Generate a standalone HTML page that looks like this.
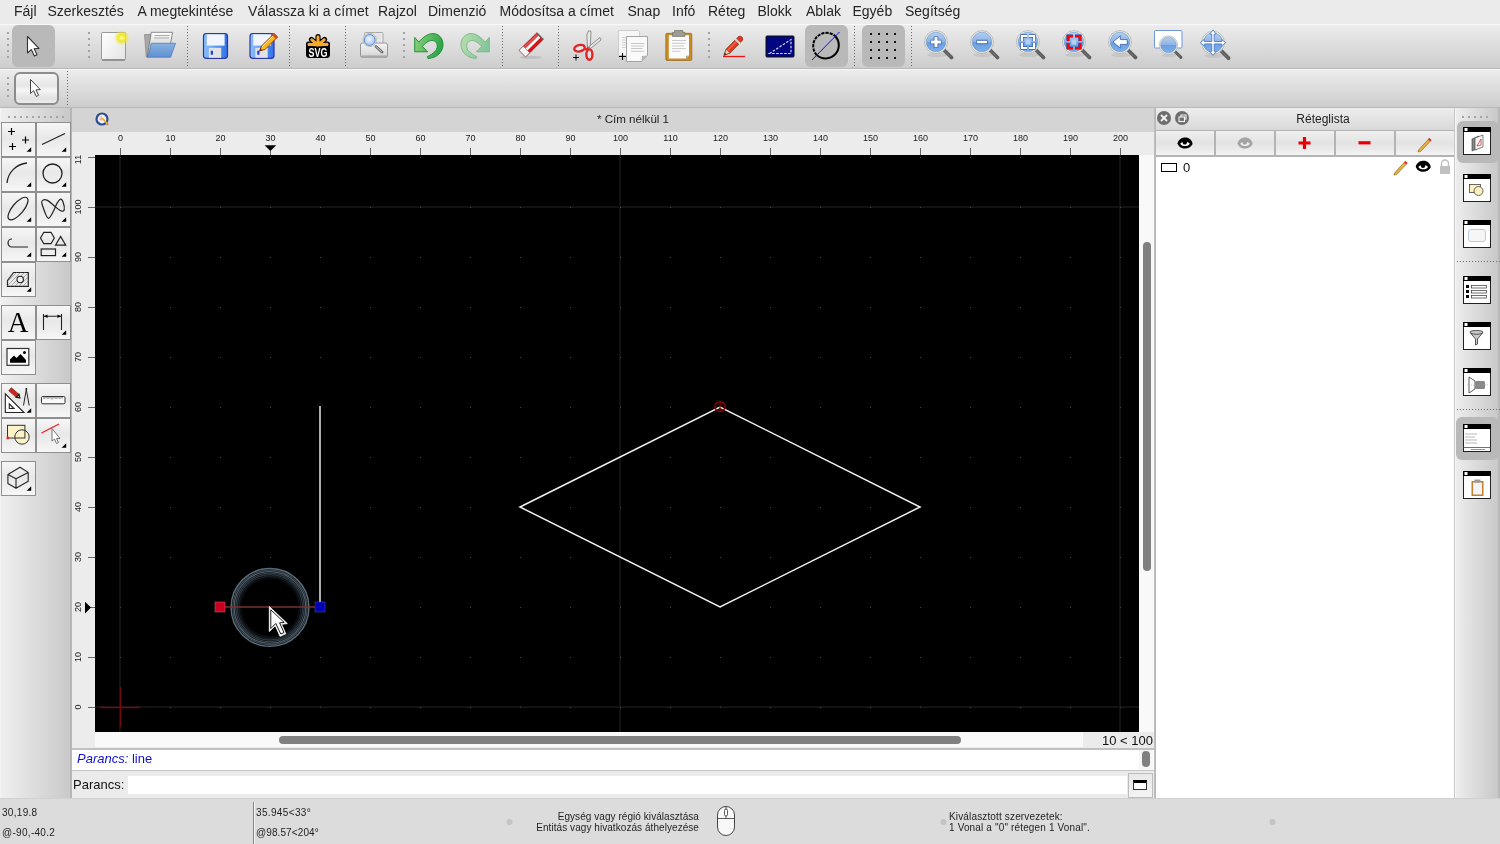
<!DOCTYPE html>
<html><head><meta charset="utf-8">
<style>
*{margin:0;padding:0;box-sizing:border-box}
html,body{width:1500px;height:844px;overflow:hidden;background:#ececec;font-family:"Liberation Sans",sans-serif;position:relative}
#wrap{position:absolute;left:0;top:0;width:1500px;height:844px;will-change:transform}
.a{position:absolute}
#menu{left:0;top:0;width:1500px;height:24px;background:#ebebeb}
#menu span{position:absolute;top:3px;font-size:14px;color:#252525;white-space:nowrap}
#tb1{left:0;top:24px;width:1500px;height:45px;background:linear-gradient(#ececec,#dedede 45%,#cdcdcd);border-top:1px solid #f8f8f8;border-bottom:1px solid #b8b8b8}
#tb2{left:0;top:69px;width:1500px;height:39px;background:linear-gradient(#ececec,#dedede 45%,#cdcdcd);border-top:1px solid #f8f8f8;border-bottom:1px solid #b8b8b8}
.sep{position:absolute;width:1px;background:repeating-linear-gradient(#6a6a6a 0 1px,transparent 1px 3px)}
.hdl{position:absolute;width:3px}
.hdl i{position:absolute;left:0;width:2px;height:2px;background:#a4a4a4}
.selbtn{position:absolute;background:#b9b9b9;border-radius:6px}
#ldock{left:0;top:108px;width:70px;height:690px;background:linear-gradient(90deg,#f6f6f6,#efefef 2%,#c9c9c9)}
.tbtn{position:absolute;width:35px;height:35px;border:1px solid #8f8f8f;background:linear-gradient(#f6f6f6,#e8e8e8 45%,#eeeeee 70%,#f6f6f6)}
.tbtn svg{position:absolute;left:0;top:0}
.hdlh i{position:absolute;top:0;width:2px;height:2px;background:#a4a4a4}
.lbtn{top:131px;width:58px;height:24px;background:linear-gradient(#efefef,#e3e3e3 50%,#ececec 80%,#f3f3f3)}
.sep2{width:43px;height:1px;background:repeating-linear-gradient(90deg,#6a6a6a 0 1px,transparent 1px 3px)}
.tri{position:absolute;right:3px;bottom:3px;width:0;height:0;border-left:6px solid transparent;border-bottom:6px solid #000}
#mdi{left:72px;top:108px;width:1084px;height:690px;background:#ececec}
#rdock{left:1155px;top:108px;width:300px;height:690px;background:#fff;border-left:1px solid #b8b8b8}
#rtb{left:1455px;top:108px;width:45px;height:690px;background:linear-gradient(90deg,#ededed,#c8c8c8);border-left:1px solid #f6f6f6;border-right:2px solid #bababa}
#status{left:0;top:798px;width:1500px;height:46px;background:#dcdcdc;border-top:1px solid #d0d0d0}
#status span{letter-spacing:0.25px;position:absolute;font-size:10px;color:#1e1e1e;white-space:nowrap;line-height:11px}
</style></head><body><div id="wrap">
<div id="menu" class="a">
<span style="left:14px">Fájl</span>
<span style="left:47.5px">Szerkesztés</span>
<span style="left:137.5px">A megtekintése</span>
<span style="left:248px">Válassza ki a címet</span>
<span style="left:378px">Rajzol</span>
<span style="left:428px">Dimenzió</span>
<span style="left:499.5px">Módosítsa a címet</span>
<span style="left:627.5px">Snap</span>
<span style="left:672px">Infó</span>
<span style="left:708px">Réteg</span>
<span style="left:757.5px">Blokk</span>
<span style="left:806px">Ablak</span>
<span style="left:852.5px">Egyéb</span>
<span style="left:905px">Segítség</span>
</div>

<div id="tb1" class="a"></div>
<div id="tb2" class="a"></div>
<div class="hdl" style="left:7px;top:0"><i style="top:32px"></i><i style="top:38px"></i><i style="top:44px"></i><i style="top:50px"></i><i style="top:56px"></i></div>
<div class="hdl" style="left:88px;top:0"><i style="top:32px"></i><i style="top:38px"></i><i style="top:44px"></i><i style="top:50px"></i><i style="top:56px"></i></div>
<div class="hdl" style="left:403px;top:0"><i style="top:32px"></i><i style="top:38px"></i><i style="top:44px"></i><i style="top:50px"></i><i style="top:56px"></i></div>
<div class="hdl" style="left:708px;top:0"><i style="top:32px"></i><i style="top:38px"></i><i style="top:44px"></i><i style="top:50px"></i><i style="top:56px"></i></div>
<div class="hdl" style="left:7px;top:0"><i style="top:77px"></i><i style="top:83px"></i><i style="top:89px"></i><i style="top:95px"></i></div>
<div class="sep" style="left:187px;top:26px;height:40px"></div>
<div class="sep" style="left:289px;top:26px;height:40px"></div>
<div class="sep" style="left:345px;top:26px;height:40px"></div>
<div class="sep" style="left:502px;top:26px;height:40px"></div>
<div class="sep" style="left:558px;top:26px;height:40px"></div>
<div class="sep" style="left:854px;top:26px;height:40px"></div>
<div class="sep" style="left:911px;top:26px;height:40px"></div>
<div class="sep" style="left:67px;top:71px;height:35px"></div>
<div class="selbtn" style="left:12px;top:25px;width:43px;height:42px"></div>
<div class="selbtn" style="left:805px;top:25px;width:43px;height:42px"></div>
<div class="selbtn" style="left:862px;top:25px;width:43px;height:42px"></div>
<div class="a" style="left:14px;top:72px;width:45px;height:33px;border:2px solid #8c8c8c;border-radius:6px;background:linear-gradient(#f4f4f4,#e6e6e6 40%,#f6f6f6 55%,#e2e2e2 85%,#ececec)"></div>
<svg class="a" style="left:0;top:0" width="1500" height="108" viewBox="0 0 1500 108">
<defs>
<radialGradient id="glow" cx="0.5" cy="0.5" r="0.5"><stop offset="0" stop-color="#ffffb0"/><stop offset="0.45" stop-color="#f2e62a"/><stop offset="1" stop-color="#f2e62a" stop-opacity="0"/></radialGradient>
<linearGradient id="zb" x1="0" y1="0" x2="0" y2="1"><stop offset="0" stop-color="#b4cff0"/><stop offset="0.48" stop-color="#8eb4e6"/><stop offset="0.52" stop-color="#6e9ede"/><stop offset="1" stop-color="#7ab0ee"/></linearGradient>

<linearGradient id="pg" x1="0" y1="0" x2="1" y2="1"><stop offset="0" stop-color="#ffffff"/><stop offset="1" stop-color="#e4e4e4"/></linearGradient>
<g id="mag"><ellipse cx="1" cy="13" rx="10" ry="2.2" fill="#000" opacity="0.07"/><path d="M7.5 7.5 L15.5 15.5" stroke="#5e5e5e" stroke-width="3.8" stroke-linecap="round"/><path d="M8 8.3 L15 15.2" stroke="#8a8a8a" stroke-width="1" stroke-dasharray="1 1"/><circle cx="0" cy="0" r="11.4" fill="#f2f2ee" stroke="#b4b4ac" stroke-width="0.9"/><circle cx="0" cy="0" r="9.8" fill="url(#zb)" stroke="#6890c8" stroke-width="0.6"/></g>
</defs>
<!-- select arrows -->
<path d="M27.5 36.5 L27.5 53 L31.3 49.6 L34.4 56 L37 54.8 L34.1 48.7 L39 48.4 Z" fill="#fff" stroke="#333" stroke-width="1.1" stroke-linejoin="round"/>
<path d="M30.5 79.5 L30.5 93.5 L33.6 90.7 L36.3 96.5 L38.6 95.4 L36 89.9 L40.3 89.6 Z" fill="#fff" stroke="#444" stroke-width="1" stroke-linejoin="round"/>
<!-- new doc -->
<rect x="101.5" y="32.5" width="24" height="27" rx="0.8" fill="url(#pg)" stroke="#8f8f8f" stroke-width="0.9"/>
<line x1="102" y1="60.2" x2="125" y2="60.2" stroke="#8a8a8a" stroke-width="1.3"/>
<circle cx="121.8" cy="37.8" r="7.8" fill="url(#glow)"/>
<!-- open folder -->
<defs><linearGradient id="ppg" x1="0" y1="0" x2="0" y2="1"><stop offset="0" stop-color="#ffffff"/><stop offset="1" stop-color="#b4b4b4"/></linearGradient>
<linearGradient id="fbg" x1="0" y1="0" x2="0" y2="1"><stop offset="0" stop-color="#8cb2e0"/><stop offset="1" stop-color="#5d90d2"/></linearGradient></defs>
<path d="M144.5 34.5 H152 L149 57 H146.3 Z" fill="#a8a8a8" stroke="#7a7a7a" stroke-width="0.6"/>
<path d="M151.3 32.3 H172.6 L170.5 44 L147.2 56.5 Z" fill="url(#ppg)" stroke="#707070" stroke-width="0.8" stroke-linejoin="round"/>
<path d="M154.5 35.5 H169.5 M154 38 H169" stroke="#a8a8a8" stroke-width="1.1"/>
<path d="M151.3 43.3 H175.5 L170.6 57.2 H147 C149.5 53 150 48 151.3 43.3 Z" fill="url(#fbg)" stroke="#4a7cc0" stroke-width="0.8" stroke-linejoin="round"/>
<!-- save -->
<defs><linearGradient id="fl" x1="0" y1="0" x2="1" y2="0"><stop offset="0" stop-color="#8cc0f8"/><stop offset="0.5" stop-color="#5d9cf0"/><stop offset="1" stop-color="#3070e8"/></linearGradient></defs>
<rect x="203.5" y="33.5" width="24" height="24.8" rx="2.8" fill="url(#fl)" stroke="#2a35a8" stroke-width="1.2"/>
<rect x="206.8" y="34.3" width="17.8" height="11.3" fill="#f2f5fd"/>
<rect x="208.8" y="47.8" width="12.4" height="10" fill="#e2e2e6"/>
<rect x="210.7" y="50.7" width="2.3" height="4" fill="#1f48d0"/>
<!-- save as -->
<rect x="250.0" y="33.5" width="24" height="24.8" rx="2.8" fill="url(#fl)" stroke="#2a35a8" stroke-width="1.2"/>
<rect x="253.3" y="34.3" width="17.8" height="11.3" fill="#f2f5fd"/>
<rect x="255.3" y="47.8" width="12.4" height="10" fill="#e2e2e6"/>
<rect x="257.2" y="50.7" width="2.3" height="4" fill="#1f48d0"/>
<path d="M259.5 51 L261.5 46 L274 33.5 L277.5 37 L265 49.5 Z" fill="#f8b818" stroke="#a8300c" stroke-width="0.9" stroke-linejoin="round"/>
<path d="M262 47 L274.5 34.5" stroke="#ffe890" stroke-width="0.9"/>
<path d="M272.5 35 L274 33.5 L277.5 37 L276 38.5 Z" fill="#e84818" stroke="#a8300c" stroke-width="0.6"/>
<path d="M259.5 51 L260.5 48.3 L262.2 50 Z" fill="#333"/>
<!-- SVG logo -->
<g stroke="#000" stroke-width="5.2" stroke-linecap="round">
<path d="M318 45 L318 36.5 M318 45 L311.5 39.5 M318 45 L324.5 39.5 M318 45 L308.5 44 M318 45 L327.5 44"/>
</g>
<rect x="306" y="43" width="24" height="15" rx="3.5" fill="#000"/>
<g stroke="#f7ac2c" stroke-width="3" stroke-linecap="round">
<path d="M318 45 L318 36.8 M318 45 L311.8 39.8 M318 45 L324.2 39.8 M318 45 L309 44.3 M318 45 L327 44.3"/>
</g>
<rect x="308" y="44.3" width="20" height="1.6" fill="#f7ac2c"/>
<text transform="translate(318 56.8) scale(0.66 1)" text-anchor="middle" font-family="Liberation Sans" font-weight="bold" font-size="13.6" fill="#fff">SVG</text>
<!-- print preview -->
<defs><linearGradient id="prg" x1="0" y1="0" x2="0" y2="1"><stop offset="0" stop-color="#f4f4f4"/><stop offset="0.7" stop-color="#dedede"/><stop offset="1" stop-color="#c8c8c8"/></linearGradient>
<radialGradient id="lens" cx="0.45" cy="0.4" r="0.6"><stop offset="0" stop-color="#eef4fb"/><stop offset="1" stop-color="#a9c6e8"/></radialGradient></defs>
<rect x="364.5" y="32.5" width="18.5" height="12" rx="1" fill="#e8e8e8" stroke="#9a9a9a" stroke-width="0.8"/>
<path d="M368 36 H380 M368 38.5 H380" stroke="#d4d4d4" stroke-width="0.8"/>
<rect x="360.5" y="43" width="27" height="14.5" rx="2" fill="url(#prg)" stroke="#8c8c8c" stroke-width="0.9"/>
<rect x="361" y="55.5" width="26" height="2.5" rx="1" fill="#a8a8a8"/>
<path d="M376 46.5 L382 52" stroke="#6a6a6a" stroke-width="2.8" stroke-linecap="round"/>
<path d="M376 46.5 L381.5 51.5" stroke="#d8d8d8" stroke-width="0.9" stroke-linecap="round"/>
<circle cx="369.7" cy="40" r="6.6" fill="#f2f2f2" stroke="#a8a8a8" stroke-width="0.8"/>
<circle cx="369.7" cy="40" r="5.4" fill="url(#lens)" stroke="#5a8ad0" stroke-width="1"/>
<!-- undo -->
<linearGradient id="ug" x1="0" y1="0" x2="1" y2="0.3"><stop offset="0" stop-color="#8fd47a"/><stop offset="1" stop-color="#2fa54c"/></linearGradient>
<linearGradient id="rg" x1="1" y1="0" x2="0" y2="0.3"><stop offset="0" stop-color="#b8e0ac"/><stop offset="1" stop-color="#86c69a"/></linearGradient>
<path d="M414.7 37.4 L418.9 42.1 C423 37 428 33.6 433 33.6 C438.5 33.6 443 38 443 44.5 C443 52 437 58 428 58.5 L427.4 56.6 C433 54 437.3 50.5 437.3 46 C437.3 42.5 435 40.5 432 40.5 C429 40.5 425 43 422.4 46.5 L427.6 51.8 L414.7 51.8 Z" fill="url(#ug)" stroke="#168a30" stroke-width="0.9" stroke-linejoin="round"/>
<path d="M414.7 37.4 L418.9 42.1 C423 37 428 33.6 433 33.6 C438.5 33.6 443 38 443 44.5 C443 52 437 58 428 58.5 L427.4 56.6 C433 54 437.3 50.5 437.3 46 C437.3 42.5 435 40.5 432 40.5 C429 40.5 425 43 422.4 46.5 L427.6 51.8 L414.7 51.8 Z" transform="translate(904 0) scale(-1 1)" fill="url(#rg)" stroke="#78b48a" stroke-width="0.9" stroke-linejoin="round"/>
<!-- eraser -->
<ellipse cx="531" cy="57.3" rx="11" ry="1.6" fill="#000" opacity="0.1"/>
<g transform="translate(522.3 53.6) rotate(-44.5)">
<rect x="0" y="-4.6" width="25" height="9.2" fill="#d41414" stroke="#8a1010" stroke-width="0.6"/>
<rect x="5.5" y="-4.2" width="18.5" height="2.6" fill="#e44a4a"/>
<rect x="5.5" y="-1.5" width="18.5" height="2.9" fill="#f6f6f6"/>
<rect x="0" y="-4.6" width="5.8" height="9.2" fill="#f4f4f4" stroke="#777" stroke-width="0.6"/>
<rect x="24" y="-4.6" width="1.6" height="9.2" fill="#6a6a6a"/>
</g>
<!-- scissors -->
<path d="M587.5 47 L586.8 35 L588.5 30.8 L591 31.3 L590.2 47.5 Z" fill="#e8e8e8" stroke="#6a6a6a" stroke-width="0.7"/>
<path d="M589 46.5 L600 37.5 L601 40 L590.5 48.5 Z" fill="#e8e8e8" stroke="#6a6a6a" stroke-width="0.7"/>
<ellipse cx="579.5" cy="48.2" rx="5.3" ry="3.2" transform="rotate(-12 579.5 48.2)" fill="#fff" fill-opacity="0.3" stroke="#e02424" stroke-width="2.4"/>
<ellipse cx="589.4" cy="54.6" rx="3" ry="5.2" fill="#fff" fill-opacity="0.3" stroke="#e02424" stroke-width="2.4"/>
<path d="M585 50 L588.5 47.5" stroke="#e02424" stroke-width="2"/>
<path d="M573 57.5 L579 57.5 M576 54.5 L576 60.5" stroke="#000" stroke-width="1"/>
<!-- copy -->
<path d="M618.5 30.5 L638.5 30.5 L639.5 31.5 L639.5 55.5 L618.5 55.5 Z" fill="#f6f6f6" stroke="#c4c4c4" stroke-width="0.8"/>
<path d="M622 37.5 H626 M622 40 H626 M622 42.5 H626 M622 45 H626 M622 47.5 H626" stroke="#cfcfcf" stroke-width="0.9"/>
<path d="M626.5 36.5 H647.5 V55.5 L641.5 61.5 H626.5 Z" fill="#fafafa" stroke="#9a9a9a" stroke-width="0.9"/>
<path d="M641.5 61.5 L641.8 56 L647.5 55.5 Z" fill="#b8b8b8"/>
<path d="M631 43.5 H644.5 M631 46 H644 M631 48.5 H642.5 M631 51.3 H644.5" stroke="#c2c2c2" stroke-width="0.9"/>
<path d="M619 56.5 H626 M622.5 53 V60" stroke="#000" stroke-width="1.1"/>
<!-- paste -->
<rect x="665.8" y="33.3" width="26" height="27.2" rx="1.2" fill="#c98a26" stroke="#9a6418" stroke-width="0.7"/>
<path d="M668.8 35.3 H689 V55.5 L686 58.5 H668.8 Z" fill="#fbfbfb"/>
<path d="M686 58.5 L686 55.8 L689 55.5 Z" fill="#a8a8a8"/>
<path d="M672 40.5 H686 M672 43.3 H685.5 M672 46 H684 M672 48.6 H686 M672 51.3 H680.5" stroke="#c4c4c4" stroke-width="0.9"/>
<path d="M674.5 30.5 H683 V32.5 H685 V36.5 H672.5 V32.5 H674.5 Z" fill="#9c9c90" stroke="#6a6a62" stroke-width="0.6" stroke-linejoin="round"/>
<!-- pencil -->
<g transform="translate(724 55.3) rotate(-45.5)">
<path d="M0 0 L6 -2.8 L18.5 -2.8 L18.5 2.8 L6 2.8 Z" fill="#e23a2a" stroke="#7a3a10" stroke-width="0.7"/>
<path d="M6 -0.8 L18.5 -0.8" stroke="#f06a40" stroke-width="1.2"/>
<path d="M0 0 L6 -2.8 L6 2.8 Z" fill="#f2c9a8" stroke="#7a3a10" stroke-width="0.6"/>
<path d="M0 0 L2.4 -1.1 L2.4 1.1 Z" fill="#222"/>
<rect x="18.5" y="-2.8" width="2.4" height="5.6" fill="#cfcfcf"/>
<path d="M20.9 -2.8 L22.8 -2.8 A2.8 2.8 0 0 1 22.8 2.8 L20.9 2.8 Z" fill="#ee2a2a" stroke="#7a3a10" stroke-width="0.6"/>
</g>
<line x1="723" y1="56.5" x2="745" y2="56.5" stroke="#f01010" stroke-width="1.3"/>
<!-- blue tri box -->
<rect x="766" y="36" width="28" height="21" rx="1" fill="#000580" stroke="#111" stroke-width="1"/>
<path d="M769.5 53.5 L791 39.5 L791 53.5 Z" fill="none" stroke="#d8d8f8" stroke-width="1.2" stroke-dasharray="2.5 1.5"/>
<!-- circle icon -->
<path d="M816.7 55 A13.2 13.2 0 0 1 835.3 36.3" fill="none" stroke="#000" stroke-width="2" stroke-dasharray="3.2 1"/>
<path d="M835.3 36.3 A13.2 13.2 0 0 1 816.7 55" fill="none" stroke="#000" stroke-width="2"/>
<line x1="812" y1="60" x2="839.5" y2="32" stroke="#0a10ff" stroke-width="1"/>
<!-- grid -->
<g fill="#111">
<rect x="870" y="33" width="2" height="2"/><rect x="878" y="33" width="2" height="2"/><rect x="886" y="33" width="2" height="2"/><rect x="894" y="33" width="2" height="2"/>
<rect x="870" y="41" width="2" height="2"/><rect x="878" y="41" width="2" height="2"/><rect x="886" y="41" width="2" height="2"/><rect x="894" y="41" width="2" height="2"/>
<rect x="870" y="49" width="2" height="2"/><rect x="878" y="49" width="2" height="2"/><rect x="886" y="49" width="2" height="2"/><rect x="894" y="49" width="2" height="2"/>
<rect x="870" y="57" width="2" height="2"/><rect x="878" y="57" width="2" height="2"/><rect x="886" y="57" width="2" height="2"/><rect x="894" y="57" width="2" height="2"/>
</g>
<!-- zoom icons -->
<use href="#mag" x="936" y="42"/><path d="M930.5 42 L941.5 42 M936 36.5 L936 47.5" stroke="#2c5aa6" stroke-width="4.6"/><path d="M931 42 L941 42 M936 37 L936 47" stroke="#fff" stroke-width="3"/>
<use href="#mag" x="982" y="42"/><path d="M976.5 42 L987.5 42" stroke="#2c5aa6" stroke-width="4.4"/><path d="M977 42 L987 42" stroke="#fff" stroke-width="2.6"/>
<use href="#mag" x="1028" y="42"/><rect x="1025.5" y="39.5" width="5" height="5" fill="#b4d0f2"/><path d="M1022 41 V36 H1027 M1029 36 H1034 V41 M1034 43 V48 H1029 M1027 48 H1022 V43" stroke="#2c5aa6" stroke-width="3.4" fill="none"/><path d="M1022 41 V36 H1027 M1029 36 H1034 V41 M1034 43 V48 H1029 M1027 48 H1022 V43" stroke="#fff" stroke-width="2.2" fill="none"/>
<use href="#mag" x="1074" y="42"/><rect x="1071.5" y="39.5" width="5" height="5" fill="#b4d0f2"/><path d="M1068 41 V36 H1073 M1075 36 H1080 V41 M1080 43 V48 H1075 M1073 48 H1068 V43" stroke="#2c3aa6" stroke-width="3.2" fill="none"/><path d="M1068 41 V36 H1073 M1075 36 H1080 V41 M1080 43 V48 H1075 M1073 48 H1068 V43" stroke="#ff0000" stroke-width="2.2" fill="none"/>
<use href="#mag" x="1120" y="42"/><path d="M1113 42 L1120.3 35.8 V39.6 H1127.3 V44.4 H1120.3 V48.2 Z" fill="#fff" stroke="#2c5aa6" stroke-width="0.8" stroke-linejoin="round"/>
<rect x="1154.5" y="30.5" width="27.5" height="17.5" rx="1" fill="#fff" stroke="#6f98d4" stroke-width="1"/>
<g transform="translate(1168.5 45) scale(0.8)"><use href="#mag"/></g>
<use href="#mag" x="1213" y="42.7"/><path d="M1213 29.900000000000002 L1216.2 34.1 H1214.2 V41.5 H1221.6 V39.5 L1225.8 42.7 L1221.6 45.900000000000006 V43.900000000000006 H1214.2 V51.3 H1216.2 L1213 55.5 L1209.8 51.3 H1211.8 V43.900000000000006 H1204.4 V45.900000000000006 L1200.2 42.7 L1204.4 39.5 V41.5 H1211.8 V34.1 H1209.8 Z" fill="#fff" stroke="#4f7fc8" stroke-width="0.9" stroke-linejoin="round"/>
</svg>

<div id="ldock" class="a"></div>
<div class="a" style="left:70px;top:108px;width:2px;height:690px;background:#b6b6b6"></div>
<div class="hdlh a" style="left:0;top:116px"><i style="left:8px"></i><i style="left:14px"></i><i style="left:20px"></i><i style="left:26px"></i><i style="left:32px"></i><i style="left:38px"></i><i style="left:44px"></i><i style="left:50px"></i><i style="left:56px"></i><i style="left:62px"></i></div>
<div class="tbtn" style="left:1px;top:122px"></div>
<div class="tbtn" style="left:36px;top:122px"></div>
<div class="tbtn" style="left:1px;top:157px"></div>
<div class="tbtn" style="left:36px;top:157px"></div>
<div class="tbtn" style="left:1px;top:192px"></div>
<div class="tbtn" style="left:36px;top:192px"></div>
<div class="tbtn" style="left:1px;top:227px"></div>
<div class="tbtn" style="left:36px;top:227px"></div>
<div class="tbtn" style="left:1px;top:262px"></div>
<div class="tbtn" style="left:1px;top:305px"></div>
<div class="tbtn" style="left:36px;top:305px"></div>
<div class="tbtn" style="left:1px;top:340px"></div>
<div class="tbtn" style="left:1px;top:383px"></div>
<div class="tbtn" style="left:36px;top:383px"></div>
<div class="tbtn" style="left:1px;top:418px"></div>
<div class="tbtn" style="left:36px;top:418px"></div>
<div class="tbtn" style="left:1px;top:461px"></div>
<svg class="a" style="left:0;top:0" width="72" height="798" viewBox="0 0 72 798" fill="none" stroke="#222" stroke-width="1.3">
<g fill="#000" stroke="none"><path d="M26.6 151.8 L31.2 147.2 L31.2 151.8 Z"/><path d="M61.6 151.8 L66.2 147.2 L66.2 151.8 Z"/><path d="M26.6 186.8 L31.2 182.2 L31.2 186.8 Z"/><path d="M61.6 186.8 L66.2 182.2 L66.2 186.8 Z"/><path d="M26.6 221.8 L31.2 217.2 L31.2 221.8 Z"/><path d="M61.6 221.8 L66.2 217.2 L66.2 221.8 Z"/><path d="M26.6 256.8 L31.2 252.2 L31.2 256.8 Z"/><path d="M61.6 256.8 L66.2 252.2 L66.2 256.8 Z"/><path d="M26.6 291.8 L31.2 287.2 L31.2 291.8 Z"/><path d="M61.6 334.8 L66.2 330.2 L66.2 334.8 Z"/><path d="M26.6 412.8 L31.2 408.2 L31.2 412.8 Z"/><path d="M61.6 447.8 L66.2 443.2 L66.2 447.8 Z"/><path d="M26.6 490.8 L31.2 486.2 L31.2 490.8 Z"/></g>
<!-- points -->
<path d="M8 131.5 H15 M11.5 128 V135 M22 140 H29 M25.5 136.5 V143.5 M9 146.5 H16 M12.5 143 V150" stroke="#000" stroke-width="1.2"/>
<!-- line -->
<path d="M42 144.5 L65 133.5" stroke="#222" stroke-width="1.2"/>
<!-- arc -->
<path d="M7 183 A22 22 0 0 1 27 163" stroke-width="1.3"/>
<!-- circle -->
<circle cx="52.5" cy="173.5" r="9.5"/>
<!-- ellipse -->
<ellipse cx="18" cy="208.6" rx="14" ry="5.6" transform="rotate(-50 18 208.6)" stroke-width="1.2"/>
<!-- spline -->
<path d="M42 201 C45 197 50 202 55.4 206.9 C59 210 63 213 64.2 210 C65 206 62 197 60 199.5 C58 201 56.5 204 55.4 206.9 C53 212 50.5 218 48.5 218.4 C46.5 218.5 44 210 42 204 C41.5 202.5 41.6 201.5 42 201 Z" stroke-width="1.2"/>
<!-- polyline -->
<path d="M12 239 A3.5 3.5 0 0 0 12 247 H28" stroke-width="1.2"/>
<!-- polygon shapes -->
<path d="M40.5 238 L43.8 232.3 L51 232.3 L54.3 238 L51 243.7 L43.8 243.7 Z M55.5 245.2 L60.6 236.5 L65.7 245.2 Z" stroke-width="1.2"/>
<rect x="41.2" y="249" width="14.3" height="6.6" stroke-width="1.2"/>
<!-- hatch -->
<path d="M7.5 280.5 L13.5 272.5 L28.3 272.5 L28.3 286.3 L7.5 286.3 Z" stroke-width="1.2"/>
<clipPath id="hc"><path d="M7.5 280.5 L13.5 272.5 L28.3 272.5 L28.3 286.3 L7.5 286.3 Z"/></clipPath>
<g clip-path="url(#hc)"><path d="M6 287 L21 272 M10 287 L25 272 M14 287 L29 272 M18 287 L33 272 M22 287 L37 272 M2 287 L17 272" stroke="#8a8a8a" stroke-width="0.7"/></g>
<circle cx="20.2" cy="279.5" r="3.2" fill="#f0f0f0" stroke-width="1.1"/>
<!-- text A -->
<text x="18" y="331.7" text-anchor="middle" font-family="Liberation Serif" font-size="28.5" fill="#000" stroke="none">A</text>
<!-- dimension -->
<path d="M43.5 314 V330 M61.5 314 V330 M44 316.3 H61" stroke="#222" stroke-width="1.1"/>
<path d="M44 316.3 L47.5 314.5 L47.5 318.1 Z M61 316.3 L57.5 314.5 L57.5 318.1 Z" fill="#000" stroke="none"/>
<!-- image -->
<rect x="7" y="348.5" width="21.8" height="16.8" stroke="#333" stroke-width="1.2" fill="#fff"/>
<path d="M10 362.8 L10 359.5 L14 355.5 L16.5 358 L20.5 354 L26 360 L26 362.8 Z" fill="#000" stroke="none"/>
<circle cx="24.5" cy="352.4" r="1.5" fill="#000" stroke="none"/>
<!-- modify -->
<path d="M5.3 393.8 L5.3 412.5 L24 412.5 Z M9.3 403.8 L9.3 408.5 L14 408.5 Z" stroke-width="1.1" fill="#fff" fill-rule="evenodd"/>
<g transform="translate(19.8 397.8) rotate(-138.5)">
<path d="M0 0 L3 -2 L13 -2 L13 2 L3 2 Z" fill="#d82020" stroke="#6a2010" stroke-width="0.6"/>
<path d="M0 0 L3 -2 L3 2 Z" fill="#f0c8a0"/>
</g>
<path d="M23.5 405.5 L26.3 389.5 L29.2 405.5" stroke-width="1"/>
<circle cx="26.3" cy="389" r="1" fill="#222" stroke="none"/>
<!-- measure ruler -->
<rect x="41.5" y="396.5" width="23.5" height="7.3" rx="1.2" stroke-width="1" fill="#fafafa" stroke="#333"/>
<path d="M44 397 V399 M46 397 V398.5 M48 397 V399 M50 397 V398.5 M52 397 V399.5 M54 397 V398.5 M56 397 V399 M58 397 V398.5 M60 397 V399 M62 397 V398.5" stroke="#333" stroke-width="0.7"/>
<!-- block -->
<rect x="7.5" y="425.3" width="17.4" height="12.7" fill="#fdf3c8" stroke="none"/>
<circle cx="22" cy="437" r="7.2" fill="#fdf3c8" stroke="#333" stroke-width="1"/>
<rect x="7.5" y="425.3" width="17.4" height="12.7" fill="none" stroke="#333" stroke-width="1"/>
<circle cx="7.8" cy="438" r="1.4" fill="#f02020" stroke="none"/>
<!-- select -->
<path d="M41.5 433 L59 424" stroke="#f02020" stroke-width="1.3"/>
<path d="M52 428.5 L52 441 L54.5 439 L56.5 443.5 L58.5 442.5 L56.5 438.5 L60 438.5 Z" fill="#fff" stroke="#555" stroke-width="0.8"/>
<!-- cube -->
<path d="M20 467.3 L7.9 474.5 L7.9 483.6 L16 488.2 L28.2 481.3 L28.2 472.4 Z M7.9 474.5 L16 478.7 L28.2 472.4 M16 478.7 V488.2" stroke-width="1.1" stroke-linejoin="round"/>
</svg>


<div id="mdi" class="a"></div>
<div class="a" style="left:72px;top:108px;width:1082px;height:24px;background:#d4d4d4"></div>
<div class="a" style="left:72px;top:112px;width:1082px;text-align:center;font-size:11.6px;line-height:14px;color:#222;padding-left:40px">* Cím nélkül 1</div>
<div class="a" style="left:72px;top:132px;width:1082px;height:23px;background:#ececec"></div>
<div class="a" style="left:72px;top:155px;width:23px;height:593px;background:#ececec"></div>
<div class="a" style="left:95px;top:155px;width:1044px;height:577px;background:#000"></div>
<div class="a" style="left:1139px;top:155px;width:15px;height:577px;background:#f9f9f9"></div>
<div class="a" style="left:1143px;top:242px;width:8px;height:329px;background:#808080;border-radius:4px"></div>
<div class="a" style="left:95px;top:732px;width:988px;height:15px;background:#f9f9f9"></div>
<div class="a" style="left:279px;top:736px;width:682px;height:8px;background:#808080;border-radius:4px"></div>
<div class="a" style="left:1083px;top:732px;width:71px;height:16px;background:#ebebeb;font-size:13px;color:#111;text-align:right;line-height:17px;padding-right:1px">10 &lt; 100</div>
<div class="a" style="left:72px;top:748px;width:1082px;height:2px;background:#c0c0c0"></div>
<div class="a" style="left:72px;top:750px;width:1082px;height:21px;background:#fff;border-bottom:1px solid #c4c4c4"></div>
<div class="a" style="left:1139px;top:750px;width:14px;height:20px;background:#f6f6f6"></div>
<div class="a" style="left:1142px;top:751px;width:8px;height:16px;background:#808080;border-radius:4px"></div>
<div class="a" style="left:77px;top:750.5px;font-size:13px;color:#1010d0;line-height:16px"><i>Parancs:</i> line</div>
<div class="a" style="left:72px;top:771px;width:1082px;height:27px;background:#ebebeb"></div>
<div class="a" style="left:73px;top:777px;font-size:13px;color:#111;line-height:16px">Parancs:</div>
<div class="a" style="left:128px;top:776px;width:999px;height:18px;background:#fff"></div>
<div class="a" style="left:1128px;top:773px;width:25px;height:25px;border:1px solid #bdbdbd;background:linear-gradient(#e8e8e8,#f4f4f4)"></div>
<div class="a" style="left:1133px;top:780px;width:14px;height:10px;border:1px solid #333;border-top:3px solid #000;background:#fff"></div>
<div class="a" style="left:1154px;top:108px;width:2px;height:690px;background:#bdbdbd"></div>
<svg class="a" style="left:0;top:0" width="1500" height="844" viewBox="0 0 1500 844" font-family="Liberation Sans" font-size="9" fill="#222">
<g fill="#1a1a1a"><line x1="120.5" y1="148" x2="120.5" y2="155" stroke="#666" stroke-width="1"/><text x="120.5" y="141" text-anchor="middle">0</text><line x1="170.5" y1="148" x2="170.5" y2="155" stroke="#666" stroke-width="1"/><text x="170.5" y="141" text-anchor="middle">10</text><line x1="220.5" y1="148" x2="220.5" y2="155" stroke="#666" stroke-width="1"/><text x="220.5" y="141" text-anchor="middle">20</text><line x1="270.5" y1="148" x2="270.5" y2="155" stroke="#666" stroke-width="1"/><text x="270.5" y="141" text-anchor="middle">30</text><line x1="320.5" y1="148" x2="320.5" y2="155" stroke="#666" stroke-width="1"/><text x="320.5" y="141" text-anchor="middle">40</text><line x1="370.5" y1="148" x2="370.5" y2="155" stroke="#666" stroke-width="1"/><text x="370.5" y="141" text-anchor="middle">50</text><line x1="420.5" y1="148" x2="420.5" y2="155" stroke="#666" stroke-width="1"/><text x="420.5" y="141" text-anchor="middle">60</text><line x1="470.5" y1="148" x2="470.5" y2="155" stroke="#666" stroke-width="1"/><text x="470.5" y="141" text-anchor="middle">70</text><line x1="520.5" y1="148" x2="520.5" y2="155" stroke="#666" stroke-width="1"/><text x="520.5" y="141" text-anchor="middle">80</text><line x1="570.5" y1="148" x2="570.5" y2="155" stroke="#666" stroke-width="1"/><text x="570.5" y="141" text-anchor="middle">90</text><line x1="620.5" y1="148" x2="620.5" y2="155" stroke="#666" stroke-width="1"/><text x="620.5" y="141" text-anchor="middle">100</text><line x1="670.5" y1="148" x2="670.5" y2="155" stroke="#666" stroke-width="1"/><text x="670.5" y="141" text-anchor="middle">110</text><line x1="720.5" y1="148" x2="720.5" y2="155" stroke="#666" stroke-width="1"/><text x="720.5" y="141" text-anchor="middle">120</text><line x1="770.5" y1="148" x2="770.5" y2="155" stroke="#666" stroke-width="1"/><text x="770.5" y="141" text-anchor="middle">130</text><line x1="820.5" y1="148" x2="820.5" y2="155" stroke="#666" stroke-width="1"/><text x="820.5" y="141" text-anchor="middle">140</text><line x1="870.5" y1="148" x2="870.5" y2="155" stroke="#666" stroke-width="1"/><text x="870.5" y="141" text-anchor="middle">150</text><line x1="920.5" y1="148" x2="920.5" y2="155" stroke="#666" stroke-width="1"/><text x="920.5" y="141" text-anchor="middle">160</text><line x1="970.5" y1="148" x2="970.5" y2="155" stroke="#666" stroke-width="1"/><text x="970.5" y="141" text-anchor="middle">170</text><line x1="1020.5" y1="148" x2="1020.5" y2="155" stroke="#666" stroke-width="1"/><text x="1020.5" y="141" text-anchor="middle">180</text><line x1="1070.5" y1="148" x2="1070.5" y2="155" stroke="#666" stroke-width="1"/><text x="1070.5" y="141" text-anchor="middle">190</text><line x1="1120.5" y1="148" x2="1120.5" y2="155" stroke="#666" stroke-width="1"/><text x="1120.5" y="141" text-anchor="middle">200</text></g>
<clipPath id="vrc"><rect x="72" y="155" width="23" height="593"/></clipPath><g fill="#1a1a1a" clip-path="url(#vrc)"><line x1="88" y1="707.5" x2="95" y2="707.5" stroke="#666" stroke-width="1"/><text transform="translate(80.6 707) rotate(-90)" text-anchor="middle">0</text><line x1="88" y1="657.5" x2="95" y2="657.5" stroke="#666" stroke-width="1"/><text transform="translate(80.6 657) rotate(-90)" text-anchor="middle">10</text><line x1="88" y1="607.5" x2="95" y2="607.5" stroke="#666" stroke-width="1"/><text transform="translate(80.6 607) rotate(-90)" text-anchor="middle">20</text><line x1="88" y1="557.5" x2="95" y2="557.5" stroke="#666" stroke-width="1"/><text transform="translate(80.6 557) rotate(-90)" text-anchor="middle">30</text><line x1="88" y1="507.5" x2="95" y2="507.5" stroke="#666" stroke-width="1"/><text transform="translate(80.6 507) rotate(-90)" text-anchor="middle">40</text><line x1="88" y1="457.5" x2="95" y2="457.5" stroke="#666" stroke-width="1"/><text transform="translate(80.6 457) rotate(-90)" text-anchor="middle">50</text><line x1="88" y1="407.5" x2="95" y2="407.5" stroke="#666" stroke-width="1"/><text transform="translate(80.6 407) rotate(-90)" text-anchor="middle">60</text><line x1="88" y1="357.5" x2="95" y2="357.5" stroke="#666" stroke-width="1"/><text transform="translate(80.6 357) rotate(-90)" text-anchor="middle">70</text><line x1="88" y1="307.5" x2="95" y2="307.5" stroke="#666" stroke-width="1"/><text transform="translate(80.6 307) rotate(-90)" text-anchor="middle">80</text><line x1="88" y1="257.5" x2="95" y2="257.5" stroke="#666" stroke-width="1"/><text transform="translate(80.6 257) rotate(-90)" text-anchor="middle">90</text><line x1="88" y1="207.5" x2="95" y2="207.5" stroke="#666" stroke-width="1"/><text transform="translate(80.6 207) rotate(-90)" text-anchor="middle">100</text><line x1="88" y1="157.5" x2="95" y2="157.5" stroke="#666" stroke-width="1"/><text transform="translate(80.6 157) rotate(-90)" text-anchor="middle">110</text></g>
<path d="M264.6 145.3 L276.2 145.3 L270.4 151 Z" fill="#000"/>
<path d="M85 601.8 L91 607.6 L85 613.4 Z" fill="#000"/>
<!-- mdi icon -->
<circle cx="102" cy="119" r="5.5" fill="#eef0f4" stroke="#2f4d92" stroke-width="2.2"/>
<path d="M99 119 H103 M101 116 L101 121" stroke="#e08080" stroke-width="0.6"/>
<path d="M102 118 L107.5 124" stroke="#f2b21e" stroke-width="1.8"/><circle cx="107.5" cy="124.3" r="1" fill="#e07070"/>
</svg>
<svg class="a" style="left:95px;top:155px" width="1044" height="577" viewBox="95 155 1044 577">
<g stroke="#121212" stroke-width="2">
<line x1="120" y1="155" x2="120" y2="732"/>
<line x1="620" y1="155" x2="620" y2="732"/>
<line x1="1120" y1="155" x2="1120" y2="732"/>
<line x1="95" y1="207" x2="1139" y2="207"/>
<line x1="95" y1="707" x2="1139" y2="707"/>
</g>
<path d="M120 707h1v1h-1zM120 657h1v1h-1zM120 607h1v1h-1zM120 557h1v1h-1zM120 507h1v1h-1zM120 457h1v1h-1zM120 407h1v1h-1zM120 357h1v1h-1zM120 307h1v1h-1zM120 257h1v1h-1zM120 207h1v1h-1zM120 157h1v1h-1zM170 707h1v1h-1zM170 657h1v1h-1zM170 607h1v1h-1zM170 557h1v1h-1zM170 507h1v1h-1zM170 457h1v1h-1zM170 407h1v1h-1zM170 357h1v1h-1zM170 307h1v1h-1zM170 257h1v1h-1zM170 207h1v1h-1zM170 157h1v1h-1zM220 707h1v1h-1zM220 657h1v1h-1zM220 607h1v1h-1zM220 557h1v1h-1zM220 507h1v1h-1zM220 457h1v1h-1zM220 407h1v1h-1zM220 357h1v1h-1zM220 307h1v1h-1zM220 257h1v1h-1zM220 207h1v1h-1zM220 157h1v1h-1zM270 707h1v1h-1zM270 657h1v1h-1zM270 607h1v1h-1zM270 557h1v1h-1zM270 507h1v1h-1zM270 457h1v1h-1zM270 407h1v1h-1zM270 357h1v1h-1zM270 307h1v1h-1zM270 257h1v1h-1zM270 207h1v1h-1zM270 157h1v1h-1zM320 707h1v1h-1zM320 657h1v1h-1zM320 607h1v1h-1zM320 557h1v1h-1zM320 507h1v1h-1zM320 457h1v1h-1zM320 407h1v1h-1zM320 357h1v1h-1zM320 307h1v1h-1zM320 257h1v1h-1zM320 207h1v1h-1zM320 157h1v1h-1zM370 707h1v1h-1zM370 657h1v1h-1zM370 607h1v1h-1zM370 557h1v1h-1zM370 507h1v1h-1zM370 457h1v1h-1zM370 407h1v1h-1zM370 357h1v1h-1zM370 307h1v1h-1zM370 257h1v1h-1zM370 207h1v1h-1zM370 157h1v1h-1zM420 707h1v1h-1zM420 657h1v1h-1zM420 607h1v1h-1zM420 557h1v1h-1zM420 507h1v1h-1zM420 457h1v1h-1zM420 407h1v1h-1zM420 357h1v1h-1zM420 307h1v1h-1zM420 257h1v1h-1zM420 207h1v1h-1zM420 157h1v1h-1zM470 707h1v1h-1zM470 657h1v1h-1zM470 607h1v1h-1zM470 557h1v1h-1zM470 507h1v1h-1zM470 457h1v1h-1zM470 407h1v1h-1zM470 357h1v1h-1zM470 307h1v1h-1zM470 257h1v1h-1zM470 207h1v1h-1zM470 157h1v1h-1zM520 707h1v1h-1zM520 657h1v1h-1zM520 607h1v1h-1zM520 557h1v1h-1zM520 507h1v1h-1zM520 457h1v1h-1zM520 407h1v1h-1zM520 357h1v1h-1zM520 307h1v1h-1zM520 257h1v1h-1zM520 207h1v1h-1zM520 157h1v1h-1zM570 707h1v1h-1zM570 657h1v1h-1zM570 607h1v1h-1zM570 557h1v1h-1zM570 507h1v1h-1zM570 457h1v1h-1zM570 407h1v1h-1zM570 357h1v1h-1zM570 307h1v1h-1zM570 257h1v1h-1zM570 207h1v1h-1zM570 157h1v1h-1zM620 707h1v1h-1zM620 657h1v1h-1zM620 607h1v1h-1zM620 557h1v1h-1zM620 507h1v1h-1zM620 457h1v1h-1zM620 407h1v1h-1zM620 357h1v1h-1zM620 307h1v1h-1zM620 257h1v1h-1zM620 207h1v1h-1zM620 157h1v1h-1zM670 707h1v1h-1zM670 657h1v1h-1zM670 607h1v1h-1zM670 557h1v1h-1zM670 507h1v1h-1zM670 457h1v1h-1zM670 407h1v1h-1zM670 357h1v1h-1zM670 307h1v1h-1zM670 257h1v1h-1zM670 207h1v1h-1zM670 157h1v1h-1zM720 707h1v1h-1zM720 657h1v1h-1zM720 607h1v1h-1zM720 557h1v1h-1zM720 507h1v1h-1zM720 457h1v1h-1zM720 407h1v1h-1zM720 357h1v1h-1zM720 307h1v1h-1zM720 257h1v1h-1zM720 207h1v1h-1zM720 157h1v1h-1zM770 707h1v1h-1zM770 657h1v1h-1zM770 607h1v1h-1zM770 557h1v1h-1zM770 507h1v1h-1zM770 457h1v1h-1zM770 407h1v1h-1zM770 357h1v1h-1zM770 307h1v1h-1zM770 257h1v1h-1zM770 207h1v1h-1zM770 157h1v1h-1zM820 707h1v1h-1zM820 657h1v1h-1zM820 607h1v1h-1zM820 557h1v1h-1zM820 507h1v1h-1zM820 457h1v1h-1zM820 407h1v1h-1zM820 357h1v1h-1zM820 307h1v1h-1zM820 257h1v1h-1zM820 207h1v1h-1zM820 157h1v1h-1zM870 707h1v1h-1zM870 657h1v1h-1zM870 607h1v1h-1zM870 557h1v1h-1zM870 507h1v1h-1zM870 457h1v1h-1zM870 407h1v1h-1zM870 357h1v1h-1zM870 307h1v1h-1zM870 257h1v1h-1zM870 207h1v1h-1zM870 157h1v1h-1zM920 707h1v1h-1zM920 657h1v1h-1zM920 607h1v1h-1zM920 557h1v1h-1zM920 507h1v1h-1zM920 457h1v1h-1zM920 407h1v1h-1zM920 357h1v1h-1zM920 307h1v1h-1zM920 257h1v1h-1zM920 207h1v1h-1zM920 157h1v1h-1zM970 707h1v1h-1zM970 657h1v1h-1zM970 607h1v1h-1zM970 557h1v1h-1zM970 507h1v1h-1zM970 457h1v1h-1zM970 407h1v1h-1zM970 357h1v1h-1zM970 307h1v1h-1zM970 257h1v1h-1zM970 207h1v1h-1zM970 157h1v1h-1zM1020 707h1v1h-1zM1020 657h1v1h-1zM1020 607h1v1h-1zM1020 557h1v1h-1zM1020 507h1v1h-1zM1020 457h1v1h-1zM1020 407h1v1h-1zM1020 357h1v1h-1zM1020 307h1v1h-1zM1020 257h1v1h-1zM1020 207h1v1h-1zM1020 157h1v1h-1zM1070 707h1v1h-1zM1070 657h1v1h-1zM1070 607h1v1h-1zM1070 557h1v1h-1zM1070 507h1v1h-1zM1070 457h1v1h-1zM1070 407h1v1h-1zM1070 357h1v1h-1zM1070 307h1v1h-1zM1070 257h1v1h-1zM1070 207h1v1h-1zM1070 157h1v1h-1zM1120 707h1v1h-1zM1120 657h1v1h-1zM1120 607h1v1h-1zM1120 557h1v1h-1zM1120 507h1v1h-1zM1120 457h1v1h-1zM1120 407h1v1h-1zM1120 357h1v1h-1zM1120 307h1v1h-1zM1120 257h1v1h-1zM1120 207h1v1h-1zM1120 157h1v1h-1z" fill="#4a4a4a"/>
<g stroke="#700c0c" stroke-width="1.3"><line x1="100" y1="707.5" x2="140" y2="707.5"/><line x1="120.5" y1="687" x2="120.5" y2="727"/></g>
<path d="M520 507 L720 407 L920 507 L720 607 Z" fill="none" stroke="#f2f2f2" stroke-width="1.5"/>
<circle cx="720" cy="406.5" r="5" fill="none" stroke="#8c0000" stroke-width="1.5"/>
<line x1="720" y1="401" x2="720" y2="412" stroke="#8c0000" stroke-width="1.2"/>
<line x1="320" y1="406" x2="320" y2="607" stroke="#adadad" stroke-width="2"/>
<defs><radialGradient id="ring" cx="270" cy="607.5" r="40" gradientUnits="userSpaceOnUse"><stop offset="0.72" stop-color="#000" stop-opacity="0"/><stop offset="0.86" stop-color="#4a5a68"/><stop offset="0.94" stop-color="#6f8190"/><stop offset="1" stop-color="#55626e" stop-opacity="0.6"/></radialGradient></defs>
<g fill="none">
<circle cx="270" cy="607.4" r="38.9" stroke="#5a6b79" stroke-width="1.5"/>
<circle cx="270" cy="607.4" r="37.2" stroke="#3e4b56" stroke-width="1.2"/>
<circle cx="270" cy="607.4" r="35.8" stroke="#4f5e6a" stroke-width="1.3"/>
<circle cx="270" cy="607.4" r="34.2" stroke="#34404a" stroke-width="1.3"/>
<circle cx="270" cy="607.4" r="32.6" stroke="#2a343c" stroke-width="1.4"/>
<circle cx="270" cy="607.4" r="31" stroke="#161c21" stroke-width="1.6"/>
<circle cx="270" cy="607.4" r="29.4" stroke="#0a0c0e" stroke-width="1.6"/>
</g>
<line x1="225" y1="607" x2="315" y2="607" stroke="#7a3030" stroke-width="1.6"/>
<rect x="215" y="602" width="10" height="10" fill="#c8001e" stroke="#d86070" stroke-width="0.5"/>
<rect x="315" y="602" width="10" height="10" fill="#0000b4" stroke="#5050d0" stroke-width="0.5"/>
<path d="M269.3 606.5 L269.3 631.5 L275.3 625.8 L280 636.3 L285.8 633.8 L281.6 624.3 L287.3 623.6 Z" fill="#fff" stroke="#fff" stroke-width="0.8" stroke-linejoin="round"/><path d="M270.8 609.8 L270.8 628.5 L275.8 623.5 L280.8 634 L284 632.6 L279.6 622.8 L284.2 622.5 Z" fill="#fff" stroke="#000" stroke-width="0.9" stroke-linejoin="miter"/>
</svg>

<div id="rdock" class="a"></div>
<div class="a" style="left:1156px;top:108px;width:299px;height:23px;background:linear-gradient(#ededed,#d9d9d9);border-bottom:1px solid #c8c8c8"></div>
<div class="a" style="left:1156px;top:112px;width:299px;text-align:center;font-size:12px;color:#222;line-height:14px;padding-left:35px">Réteglista</div>
<div class="a" style="left:1156px;top:130px;width:299px;height:27px;background:#b4b4b4"></div>
<div class="lbtn a" style="left:1156px"></div><div class="lbtn a" style="left:1216px"></div><div class="lbtn a" style="left:1276px"></div><div class="lbtn a" style="left:1336px"></div><div class="lbtn a" style="left:1396px;width:58px"></div>
<svg class="a" style="left:1156px;top:108px" width="300" height="70" viewBox="1156 108 300 70">
<circle cx="1164" cy="118" r="7" fill="#6e6e6e"/>
<path d="M1161 115 L1167 121 M1167 115 L1161 121" stroke="#f4f4f4" stroke-width="1.8"/>
<circle cx="1182" cy="118" r="7" fill="#6e6e6e"/>
<rect x="1179" y="117" width="5.5" height="4.5" fill="none" stroke="#f4f4f4" stroke-width="1.1"/>
<path d="M1181 117 V115 H1186 V119 H1184.5" fill="none" stroke="#f4f4f4" stroke-width="1.1"/>
<!-- eye -->
<path d="M1177.5 143.5 C1178.7 138.5 1182.5 137.5 1185.5 137.5 C1189 137.5 1192 140.0 1192.6 144.0 C1191 147.3 1188 148.5 1185 148.5 C1181.5 148.5 1178.5 146.5 1177.5 143.5 Z" fill="#000"/><path d="M1180.2 143.7 C1181.5 141.0 1188.5 141.0 1189.8 143.7 C1188.5 146.8 1181.5 146.8 1180.2 143.7 Z" fill="#fff"/><circle cx="1184.8" cy="142.4" r="2.2" fill="#000"/><path d="M1237.5 143.5 C1238.7 138.5 1242.5 137.5 1245.5 137.5 C1249 137.5 1252 140.0 1252.6 144.0 C1251 147.3 1248 148.5 1245 148.5 C1241.5 148.5 1238.5 146.5 1237.5 143.5 Z" fill="#a4a4a4"/><path d="M1240.2 143.7 C1241.5 141.0 1248.5 141.0 1249.8 143.7 C1248.5 146.8 1241.5 146.8 1240.2 143.7 Z" fill="#ececec"/><circle cx="1244.8" cy="142.4" r="2.2" fill="#a4a4a4"/>
<path d="M1298.5 143 H1310.5 M1304.5 137 V149" stroke="#e80000" stroke-width="3.2"/>
<path d="M1358.5 142.8 H1370.5" stroke="#e80000" stroke-width="3.2"/>
<path d="M1418.5 150 L1429 138.5 L1431 140.5 L1420.5 151.5 L1418 152 Z" fill="#e8b040" stroke="#8a5a10" stroke-width="0.6"/>
<path d="M1428 139.5 L1429.5 138 L1431.5 140 L1430 141.5 Z" fill="#e03030"/>
<!-- layer row -->
<rect x="1161.5" y="163.5" width="15" height="8" fill="none" stroke="#000" stroke-width="1"/>
<text x="1183" y="172" font-family="Liberation Sans" font-size="13" fill="#111">0</text>
<path d="M1394.5 173 L1405 161.5 L1407 163.5 L1396.5 174.5 L1394 175 Z" fill="#e8b040" stroke="#8a5a10" stroke-width="0.6"/>
<path d="M1404 162.5 L1405.5 161 L1407.5 163 L1406 164.5 Z" fill="#e03030"/>
<path d="M1415.7 166.8 C1416.9 161.8 1420.7 160.8 1423.7 160.8 C1427.2 160.8 1430.2 163.3 1430.8 167.3 C1429.2 170.60000000000002 1426.2 171.8 1423.2 171.8 C1419.7 171.8 1416.7 169.8 1415.7 166.8 Z" fill="#000"/><path d="M1418.4 167.0 C1419.7 164.3 1426.7 164.3 1428.0 167.0 C1426.7 170.10000000000002 1419.7 170.10000000000002 1418.4 167.0 Z" fill="#fff"/><circle cx="1423.0" cy="165.7" r="2.2" fill="#000"/>
<path d="M1441.5 166 V163.5 A3.5 3.5 0 0 1 1448.5 163.5 V166" fill="none" stroke="#c0c0c0" stroke-width="1.4"/>
<rect x="1440" y="166" width="10" height="8" fill="#c0c0c0"/>
</svg>
<div class="a" style="left:1454px;top:108px;width:1px;height:690px;background:#c8c8c8"></div>

<div id="rtb" class="a"></div>
<div class="hdlh a" style="left:0;top:116px"><i style="left:1462px"></i><i style="left:1468px"></i><i style="left:1474px"></i><i style="left:1480px"></i><i style="left:1486px"></i></div>
<div class="selbtn" style="left:1457px;top:121px;width:42px;height:42px"></div>
<div class="selbtn" style="left:1456px;top:417px;width:43px;height:43px"></div>
<div class="sep2 a" style="left:1457px;top:261px"></div><div class="sep2 a" style="left:1457px;top:409px"></div>
<svg class="a" style="left:1455px;top:108px" width="45" height="400" viewBox="1455 108 45 400"><g transform="translate(1463 127)"><rect x="0.5" y="0.5" width="27" height="27" fill="#fff" stroke="#222" stroke-width="1"/><rect x="0" y="0" width="28" height="5" fill="#000"/><rect x="1.5" y="1" width="3" height="3" fill="#fff"/><path d="M9 12 L16 9 L16 21 L9 24 Z" fill="#888" stroke="#333" stroke-width="0.6"/><path d="M12 11 L20 8 L20 20 L12 23 Z" fill="#f4f4f4" stroke="#333" stroke-width="0.6"/><path d="M14 19 L18 12 L18 18 Z" fill="none" stroke="#e02020" stroke-width="0.7"/></g><g transform="translate(1463 174)"><rect x="0.5" y="0.5" width="27" height="27" fill="#fff" stroke="#222" stroke-width="1"/><rect x="0" y="0" width="28" height="5" fill="#000"/><rect x="1.5" y="1" width="3" height="3" fill="#fff"/><rect x="6.5" y="10.5" width="11" height="8" fill="#fcf0c0" stroke="#444" stroke-width="0.8"/><circle cx="15.5" cy="17" r="4.5" fill="#fcf0c0" stroke="#444" stroke-width="0.8"/></g><g transform="translate(1463 220)"><rect x="0.5" y="0.5" width="27" height="27" fill="#fff" stroke="#222" stroke-width="1"/><rect x="0" y="0" width="28" height="5" fill="#000"/><rect x="1.5" y="1" width="3" height="3" fill="#fff"/><rect x="5.5" y="9.5" width="17" height="12" rx="2.5" fill="#f6f6f6" stroke="#b8cce4" stroke-width="1"/></g><g transform="translate(1463 276)"><rect x="0.5" y="0.5" width="27" height="27" fill="#fff" stroke="#222" stroke-width="1"/><rect x="0" y="0" width="28" height="5" fill="#000"/><rect x="1.5" y="1" width="3" height="3" fill="#fff"/><g fill="#000"><rect x="3" y="9" width="3" height="3"/><rect x="3" y="14" width="3" height="3"/><rect x="3" y="19" width="3" height="3"/></g><g fill="none" stroke="#333" stroke-width="0.7"><rect x="8.5" y="9.5" width="15" height="2.5"/><rect x="8.5" y="14.5" width="15" height="2.5"/><rect x="8.5" y="19.5" width="15" height="2.5"/></g></g><g transform="translate(1463 322)"><rect x="0.5" y="0.5" width="27" height="27" fill="#fff" stroke="#222" stroke-width="1"/><rect x="0" y="0" width="28" height="5" fill="#000"/><rect x="1.5" y="1" width="3" height="3" fill="#fff"/><path d="M7 10 C7 13 20 13 20 10 C20 8 7 8 7 10 Z M7.5 11 L12.5 17 L12.5 23 L14.5 22 L14.5 17 L19.5 11" fill="#c8c8c8" stroke="#333" stroke-width="0.8"/></g><g transform="translate(1463 368)"><rect x="0.5" y="0.5" width="27" height="27" fill="#fff" stroke="#222" stroke-width="1"/><rect x="0" y="0" width="28" height="5" fill="#000"/><rect x="1.5" y="1" width="3" height="3" fill="#fff"/><path d="M6 9 L12 13 L12 21 L6 25 Z" fill="#fff" stroke="#333" stroke-width="0.8"/><rect x="12" y="13" width="10" height="8" rx="1.5" fill="#888"/><path d="M4 17 H25" stroke="#f08080" stroke-width="0.6" stroke-dasharray="1 1"/></g><g transform="translate(1463 424)"><rect x="0.5" y="0.5" width="27" height="27" fill="#fff" stroke="#222" stroke-width="1"/><rect x="0" y="0" width="28" height="5" fill="#000"/><rect x="1.5" y="1" width="3" height="3" fill="#fff"/><path d="M2 10 H14 M2 13 H12 M2 16 H14 M2 19 H14" stroke="#999" stroke-width="0.7"/><path d="M0 23.5 H28" stroke="#333" stroke-width="0.7"/><path d="M8 25.5 H22" stroke="#777" stroke-width="0.8"/></g><g transform="translate(1463 471)"><rect x="0.5" y="0.5" width="27" height="27" fill="#fff" stroke="#222" stroke-width="1"/><rect x="0" y="0" width="28" height="5" fill="#000"/><rect x="1.5" y="1" width="3" height="3" fill="#fff"/><rect x="8.5" y="10" width="12" height="15" fill="#c08030"/><rect x="10" y="11.5" width="9" height="12" fill="#f4f4f4"/><rect x="11.5" y="8.5" width="6" height="3" fill="#999"/></g></svg>

<div id="status" class="a"></div>
<div class="a" style="left:253px;top:802px;width:1px;height:42px;background:#888"></div>
<div class="a" style="left:254px;top:802px;width:1px;height:42px;background:#f4f4f4"></div>
<div class="a" style="left:2px;top:807px;font-size:10px;color:#1e1e1e;line-height:11px;letter-spacing:0.3px">30,19.8</div>
<div class="a" style="left:2px;top:827px;font-size:10px;color:#1e1e1e;line-height:11px;letter-spacing:0.3px">@-90,-40.2</div>
<div class="a" style="left:256px;top:807px;font-size:10px;color:#1e1e1e;line-height:11px;letter-spacing:0.35px">35.945&lt;33°</div>
<div class="a" style="left:256px;top:827px;font-size:10px;color:#1e1e1e;line-height:11px;letter-spacing:0.1px">@98.57&lt;204°</div>
<div class="a" style="left:400px;top:811px;width:299px;font-size:10px;color:#1e1e1e;line-height:11px;text-align:right;letter-spacing:0.06px">Egység vagy régió kiválasztása<br>Entitás vagy hivatkozás áthelyezése</div>
<div class="a" style="left:949px;top:811px;font-size:10px;color:#1e1e1e;line-height:11px;letter-spacing:0.15px">Kiválasztott szervezetek:<br>1 Vonal a "0" rétegen 1 Vonal".</div>
<svg class="a" style="left:0;top:798px" width="1500" height="46" viewBox="0 798 1500 46">
<circle cx="509.5" cy="822" r="3" fill="#c4c4c4"/>
<circle cx="943.5" cy="822" r="3" fill="#c4c4c4"/>
<circle cx="1272.5" cy="822" r="3" fill="#c4c4c4"/>
<rect x="717.5" y="806.5" width="17" height="29" rx="8.5" fill="#f8f8f8" stroke="#333" stroke-width="0.9"/>
<path d="M717.5 818.5 H734.5 M726 806.5 V818.5" stroke="#333" stroke-width="0.8"/>
<rect x="724.5" y="809" width="3" height="7" rx="1.5" fill="#fff" stroke="#333" stroke-width="0.8"/>
</svg>

</div></body></html>
